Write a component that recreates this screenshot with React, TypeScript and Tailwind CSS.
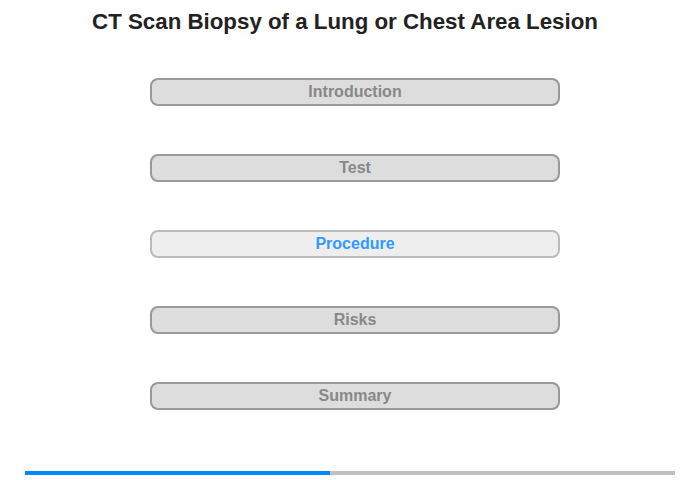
import React from "react";

const items = ["Introduction", "Test", "Procedure", "Risks", "Summary"];

export default function App() {
  return (
    <div className="w-[700px] h-[480px] bg-white flex flex-col items-center" style={{ fontFamily: '"Liberation Sans", Arial, sans-serif' }}>
      <h1 className="mt-[10px] mr-[10px] h-[24px] leading-[24px] text-[22.3px] font-bold text-[#222222]">
        CT Scan Biopsy of a Lung or Chest Area Lesion
      </h1>
      <div className="mt-[44px] ml-[10px] flex flex-col gap-[48px]">
        {items.map((t) => {
          const active = t === "Procedure";
          return (
            <div
              key={t}
              className={
                active
                  ? "w-[410px] h-[28px] rounded-[8px] border-2 border-[#bbbbbb] bg-[#eeeeee] flex items-center justify-center text-[16px] font-bold text-[#3399ff]"
                  : "w-[410px] h-[28px] rounded-[8px] border-2 border-[#999999] bg-[#dddddd] flex items-center justify-center text-[16px] font-bold text-[#888888]"
              }
            >
              {t}
            </div>
          );
        })}
      </div>
      <div className="mt-[61px] w-[650px] h-[4px] bg-[#c0c0c0] flex">
        <div className="w-[305px] h-full bg-[#0088ff]" />
      </div>
    </div>
  );
}
